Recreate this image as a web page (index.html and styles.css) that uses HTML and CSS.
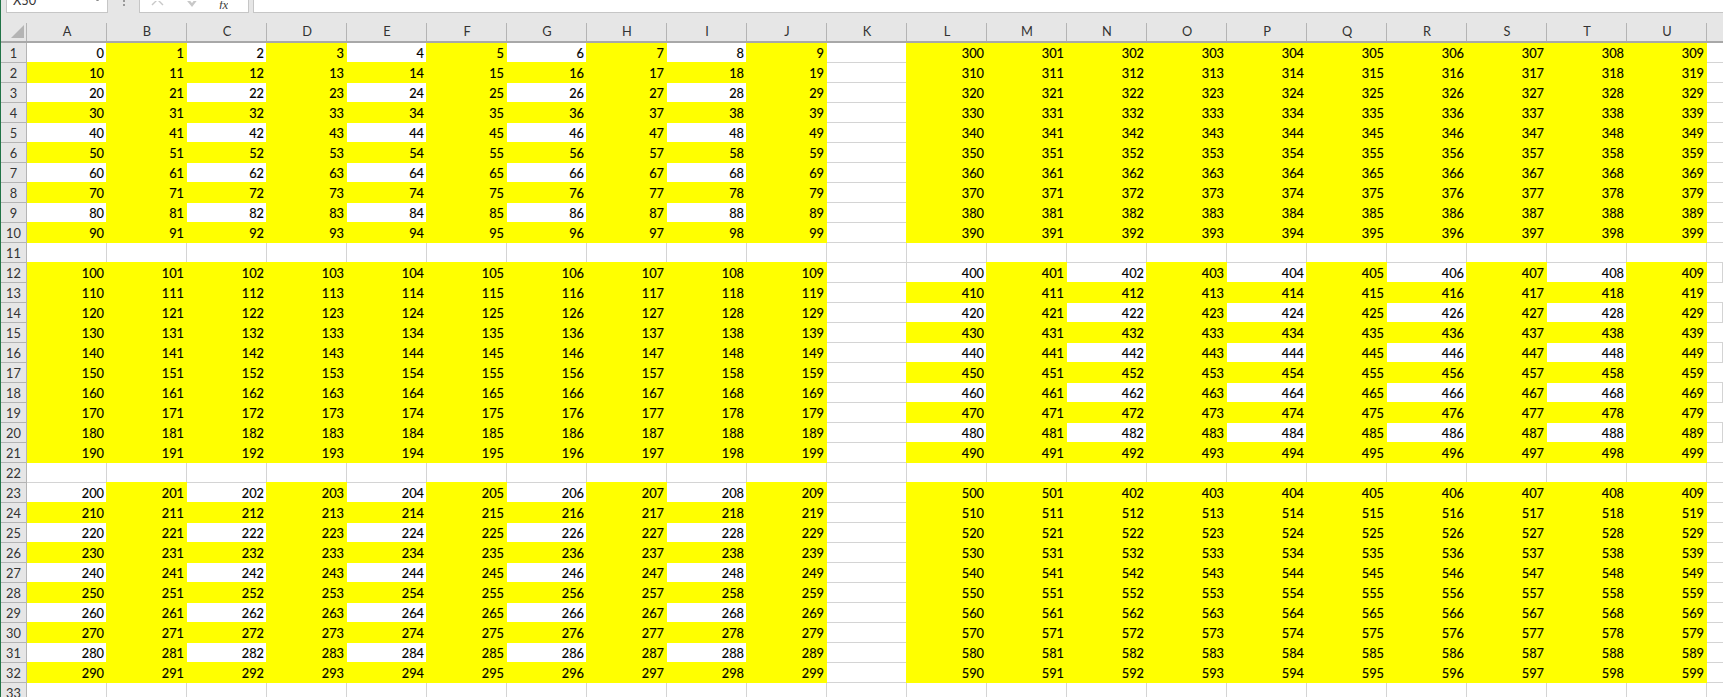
FILE: index.html
```html
<!DOCTYPE html>
<html lang="en">
<head>
<meta charset="utf-8">
<title>Sheet</title>
<link rel="stylesheet" href="styles.css">
</head>
<body>
<div class="app">
<div class="bar">
<div class="namebox"><span class="name">X50</span><svg class="chev" width="7" height="4" viewBox="0 0 7 4"><path d="M0.5 -1 L3.5 2 L6.5 -1" fill="none" stroke="#666" stroke-width="1"/></svg></div>
<div class="grip"><i></i><i></i></div>
<div class="btns">
<svg class="ico-x" width="13" height="8" viewBox="0 0 13 8"><path d="M1 -7 L12 4 M12 -7 L1 4" fill="none" stroke="#c8c8c8" stroke-width="1.4"/></svg>
<svg class="ico-c" width="14" height="8" viewBox="0 0 14 8"><path d="M1 -2 L6 4 L13 -5" fill="none" stroke="#c8c8c8" stroke-width="2.4"/></svg>
<span class="fx">fx</span>
</div>
<div class="input"></div>
</div>
<table class="sheet">
<thead>
<tr><th class="corner"><svg width="13" height="13" viewBox="0 0 13 13"><path d="M13 0 V13 H0 Z" fill="#b4b4b4"/></svg></th><th>A</th><th>B</th><th>C</th><th>D</th><th>E</th><th>F</th><th>G</th><th>H</th><th>I</th><th>J</th><th>K</th><th>L</th><th>M</th><th>N</th><th>O</th><th>P</th><th>Q</th><th>R</th><th>S</th><th>T</th><th>U</th><th class="end"></th></tr>
</thead>
<tbody>
<tr class="ck-left"><th>1</th><td>0</td><td>1</td><td>2</td><td>3</td><td>4</td><td>5</td><td>6</td><td>7</td><td>8</td><td>9</td><td></td><td>300</td><td>301</td><td>302</td><td>303</td><td>304</td><td>305</td><td>306</td><td>307</td><td>308</td><td>309</td><td class="pad"></td></tr>
<tr><th>2</th><td>10</td><td>11</td><td>12</td><td>13</td><td>14</td><td>15</td><td>16</td><td>17</td><td>18</td><td>19</td><td></td><td>310</td><td>311</td><td>312</td><td>313</td><td>314</td><td>315</td><td>316</td><td>317</td><td>318</td><td>319</td><td class="pad"></td></tr>
<tr class="ck-left"><th>3</th><td>20</td><td>21</td><td>22</td><td>23</td><td>24</td><td>25</td><td>26</td><td>27</td><td>28</td><td>29</td><td></td><td>320</td><td>321</td><td>322</td><td>323</td><td>324</td><td>325</td><td>326</td><td>327</td><td>328</td><td>329</td><td class="pad"></td></tr>
<tr><th>4</th><td>30</td><td>31</td><td>32</td><td>33</td><td>34</td><td>35</td><td>36</td><td>37</td><td>38</td><td>39</td><td></td><td>330</td><td>331</td><td>332</td><td>333</td><td>334</td><td>335</td><td>336</td><td>337</td><td>338</td><td>339</td><td class="pad"></td></tr>
<tr class="ck-left"><th>5</th><td>40</td><td>41</td><td>42</td><td>43</td><td>44</td><td>45</td><td>46</td><td>47</td><td>48</td><td>49</td><td></td><td>340</td><td>341</td><td>342</td><td>343</td><td>344</td><td>345</td><td>346</td><td>347</td><td>348</td><td>349</td><td class="pad"></td></tr>
<tr><th>6</th><td>50</td><td>51</td><td>52</td><td>53</td><td>54</td><td>55</td><td>56</td><td>57</td><td>58</td><td>59</td><td></td><td>350</td><td>351</td><td>352</td><td>353</td><td>354</td><td>355</td><td>356</td><td>357</td><td>358</td><td>359</td><td class="pad"></td></tr>
<tr class="ck-left"><th>7</th><td>60</td><td>61</td><td>62</td><td>63</td><td>64</td><td>65</td><td>66</td><td>67</td><td>68</td><td>69</td><td></td><td>360</td><td>361</td><td>362</td><td>363</td><td>364</td><td>365</td><td>366</td><td>367</td><td>368</td><td>369</td><td class="pad"></td></tr>
<tr><th>8</th><td>70</td><td>71</td><td>72</td><td>73</td><td>74</td><td>75</td><td>76</td><td>77</td><td>78</td><td>79</td><td></td><td>370</td><td>371</td><td>372</td><td>373</td><td>374</td><td>375</td><td>376</td><td>377</td><td>378</td><td>379</td><td class="pad"></td></tr>
<tr class="ck-left"><th>9</th><td>80</td><td>81</td><td>82</td><td>83</td><td>84</td><td>85</td><td>86</td><td>87</td><td>88</td><td>89</td><td></td><td>380</td><td>381</td><td>382</td><td>383</td><td>384</td><td>385</td><td>386</td><td>387</td><td>388</td><td>389</td><td class="pad"></td></tr>
<tr><th>10</th><td>90</td><td>91</td><td>92</td><td>93</td><td>94</td><td>95</td><td>96</td><td>97</td><td>98</td><td>99</td><td></td><td>390</td><td>391</td><td>392</td><td>393</td><td>394</td><td>395</td><td>396</td><td>397</td><td>398</td><td>399</td><td class="pad"></td></tr>
<tr class="blank"><th>11</th><td></td><td></td><td></td><td></td><td></td><td></td><td></td><td></td><td></td><td></td><td></td><td></td><td></td><td></td><td></td><td></td><td></td><td></td><td></td><td></td><td></td><td class="pad"></td></tr>
<tr class="ck-right"><th>12</th><td>100</td><td>101</td><td>102</td><td>103</td><td>104</td><td>105</td><td>106</td><td>107</td><td>108</td><td>109</td><td></td><td>400</td><td>401</td><td>402</td><td>403</td><td>404</td><td>405</td><td>406</td><td>407</td><td>408</td><td>409</td><td class="pad"></td></tr>
<tr><th>13</th><td>110</td><td>111</td><td>112</td><td>113</td><td>114</td><td>115</td><td>116</td><td>117</td><td>118</td><td>119</td><td></td><td>410</td><td>411</td><td>412</td><td>413</td><td>414</td><td>415</td><td>416</td><td>417</td><td>418</td><td>419</td><td class="pad"></td></tr>
<tr class="ck-right"><th>14</th><td>120</td><td>121</td><td>122</td><td>123</td><td>124</td><td>125</td><td>126</td><td>127</td><td>128</td><td>129</td><td></td><td>420</td><td>421</td><td>422</td><td>423</td><td>424</td><td>425</td><td>426</td><td>427</td><td>428</td><td>429</td><td class="pad"></td></tr>
<tr><th>15</th><td>130</td><td>131</td><td>132</td><td>133</td><td>134</td><td>135</td><td>136</td><td>137</td><td>138</td><td>139</td><td></td><td>430</td><td>431</td><td>432</td><td>433</td><td>434</td><td>435</td><td>436</td><td>437</td><td>438</td><td>439</td><td class="pad"></td></tr>
<tr class="ck-right"><th>16</th><td>140</td><td>141</td><td>142</td><td>143</td><td>144</td><td>145</td><td>146</td><td>147</td><td>148</td><td>149</td><td></td><td>440</td><td>441</td><td>442</td><td>443</td><td>444</td><td>445</td><td>446</td><td>447</td><td>448</td><td>449</td><td class="pad"></td></tr>
<tr><th>17</th><td>150</td><td>151</td><td>152</td><td>153</td><td>154</td><td>155</td><td>156</td><td>157</td><td>158</td><td>159</td><td></td><td>450</td><td>451</td><td>452</td><td>453</td><td>454</td><td>455</td><td>456</td><td>457</td><td>458</td><td>459</td><td class="pad"></td></tr>
<tr class="ck-right"><th>18</th><td>160</td><td>161</td><td>162</td><td>163</td><td>164</td><td>165</td><td>166</td><td>167</td><td>168</td><td>169</td><td></td><td>460</td><td>461</td><td>462</td><td>463</td><td>464</td><td>465</td><td>466</td><td>467</td><td>468</td><td>469</td><td class="pad"></td></tr>
<tr><th>19</th><td>170</td><td>171</td><td>172</td><td>173</td><td>174</td><td>175</td><td>176</td><td>177</td><td>178</td><td>179</td><td></td><td>470</td><td>471</td><td>472</td><td>473</td><td>474</td><td>475</td><td>476</td><td>477</td><td>478</td><td>479</td><td class="pad"></td></tr>
<tr class="ck-right"><th>20</th><td>180</td><td>181</td><td>182</td><td>183</td><td>184</td><td>185</td><td>186</td><td>187</td><td>188</td><td>189</td><td></td><td>480</td><td>481</td><td>482</td><td>483</td><td>484</td><td>485</td><td>486</td><td>487</td><td>488</td><td>489</td><td class="pad"></td></tr>
<tr><th>21</th><td>190</td><td>191</td><td>192</td><td>193</td><td>194</td><td>195</td><td>196</td><td>197</td><td>198</td><td>199</td><td></td><td>490</td><td>491</td><td>492</td><td>493</td><td>494</td><td>495</td><td>496</td><td>497</td><td>498</td><td>499</td><td class="pad"></td></tr>
<tr class="blank"><th>22</th><td></td><td></td><td></td><td></td><td></td><td></td><td></td><td></td><td></td><td></td><td></td><td></td><td></td><td></td><td></td><td></td><td></td><td></td><td></td><td></td><td></td><td class="pad"></td></tr>
<tr class="ck-left"><th>23</th><td>200</td><td>201</td><td>202</td><td>203</td><td>204</td><td>205</td><td>206</td><td>207</td><td>208</td><td>209</td><td></td><td>500</td><td>501</td><td>402</td><td>403</td><td>404</td><td>405</td><td>406</td><td>407</td><td>408</td><td>409</td><td class="pad"></td></tr>
<tr><th>24</th><td>210</td><td>211</td><td>212</td><td>213</td><td>214</td><td>215</td><td>216</td><td>217</td><td>218</td><td>219</td><td></td><td>510</td><td>511</td><td>512</td><td>513</td><td>514</td><td>515</td><td>516</td><td>517</td><td>518</td><td>519</td><td class="pad"></td></tr>
<tr class="ck-left"><th>25</th><td>220</td><td>221</td><td>222</td><td>223</td><td>224</td><td>225</td><td>226</td><td>227</td><td>228</td><td>229</td><td></td><td>520</td><td>521</td><td>522</td><td>523</td><td>524</td><td>525</td><td>526</td><td>527</td><td>528</td><td>529</td><td class="pad"></td></tr>
<tr><th>26</th><td>230</td><td>231</td><td>232</td><td>233</td><td>234</td><td>235</td><td>236</td><td>237</td><td>238</td><td>239</td><td></td><td>530</td><td>531</td><td>532</td><td>533</td><td>534</td><td>535</td><td>536</td><td>537</td><td>538</td><td>539</td><td class="pad"></td></tr>
<tr class="ck-left"><th>27</th><td>240</td><td>241</td><td>242</td><td>243</td><td>244</td><td>245</td><td>246</td><td>247</td><td>248</td><td>249</td><td></td><td>540</td><td>541</td><td>542</td><td>543</td><td>544</td><td>545</td><td>546</td><td>547</td><td>548</td><td>549</td><td class="pad"></td></tr>
<tr><th>28</th><td>250</td><td>251</td><td>252</td><td>253</td><td>254</td><td>255</td><td>256</td><td>257</td><td>258</td><td>259</td><td></td><td>550</td><td>551</td><td>552</td><td>553</td><td>554</td><td>555</td><td>556</td><td>557</td><td>558</td><td>559</td><td class="pad"></td></tr>
<tr class="ck-left"><th>29</th><td>260</td><td>261</td><td>262</td><td>263</td><td>264</td><td>265</td><td>266</td><td>267</td><td>268</td><td>269</td><td></td><td>560</td><td>561</td><td>562</td><td>563</td><td>564</td><td>565</td><td>566</td><td>567</td><td>568</td><td>569</td><td class="pad"></td></tr>
<tr><th>30</th><td>270</td><td>271</td><td>272</td><td>273</td><td>274</td><td>275</td><td>276</td><td>277</td><td>278</td><td>279</td><td></td><td>570</td><td>571</td><td>572</td><td>573</td><td>574</td><td>575</td><td>576</td><td>577</td><td>578</td><td>579</td><td class="pad"></td></tr>
<tr class="ck-left"><th>31</th><td>280</td><td>281</td><td>282</td><td>283</td><td>284</td><td>285</td><td>286</td><td>287</td><td>288</td><td>289</td><td></td><td>580</td><td>581</td><td>582</td><td>583</td><td>584</td><td>585</td><td>586</td><td>587</td><td>588</td><td>589</td><td class="pad"></td></tr>
<tr><th>32</th><td>290</td><td>291</td><td>292</td><td>293</td><td>294</td><td>295</td><td>296</td><td>297</td><td>298</td><td>299</td><td></td><td>590</td><td>591</td><td>592</td><td>593</td><td>594</td><td>595</td><td>596</td><td>597</td><td>598</td><td>599</td><td class="pad"></td></tr>
<tr class="blank"><th>33</th><td></td><td></td><td></td><td></td><td></td><td></td><td></td><td></td><td></td><td></td><td></td><td></td><td></td><td></td><td></td><td></td><td></td><td></td><td></td><td></td><td></td><td class="pad"></td></tr>
</tbody>
</table>
</div>
</body>
</html>
```
FILE: styles.css
```css
html, body {
  margin: 0;
  padding: 0;
  height: 100%;
  overflow: hidden;
  background: #fff;
}

.app {
  width: 1723px;
  height: 697px;
  box-sizing: border-box;
  border-left: 1px solid #217346;
  overflow: hidden;
  font-family: Lato, "Liberation Sans", sans-serif;
  font-size: 12.8px;
  color: #000;
}

/* Formula bar, cropped by the top edge of the shot */
.bar {
  display: flex;
  align-items: flex-end;
  height: 13px;
  background: #e6e6e6;
  overflow: hidden;
}

.namebox, .btns, .input {
  box-sizing: border-box;
  height: 20px;
  background: #fff;
  border: 1px solid #c6c6c6;
  flex: none;
  position: relative;
}

.namebox {
  width: 102px;
  margin-left: 5px;
  padding-left: 6px;
  line-height: 8px;
  color: #333;
}

.name {
  display: block;
  margin-top: 2px;
}

.chev {
  position: absolute;
  right: 6px;
  bottom: 9px;
}

.grip {
  width: 31px;
  height: 13px;
  flex: none;
  display: flex;
  flex-direction: column;
  align-items: center;
  gap: 2px;
}

.grip i {
  width: 2px;
  height: 2px;
  background: #999;
}

.btns {
  width: 110px;
  margin-right: 4px;
  display: flex;
  align-items: flex-end;
  padding-bottom: 3px;
  padding-left: 11px;
}

.ico-x { margin-right: 22px; }
.ico-c { margin-right: 19px; }

.fx {
  font-family: "Liberation Serif", serif;
  font-style: italic;
  font-size: 13px;
  line-height: 8px;
  color: #444;
  height: 8px;
  overflow: hidden;
}

.input {
  flex: 1;
  border-right: 0;
}

/* Sheet grid */
.sheet {
  border-collapse: separate;
  border-spacing: 0;
  table-layout: fixed;
  width: 1722px;
}

.sheet th, .sheet td {
  box-sizing: border-box;
  height: 20px;
  padding: 0;
  font-size: 12.8px;
  font-weight: 400;
}

.sheet th {
  position: relative;
  z-index: 1;
  background: #e6e6e6;
  color: #333;
  text-align: center;
}

.sheet thead th {
  height: 30px;
  width: 80px;
  line-height: 19px;
  vertical-align: bottom;
  border-bottom: 2px solid #a8a8a8;
}

/* Header separators stop short of the top of the band */
.sheet thead th::after {
  content: "";
  position: absolute;
  top: 10px;
  bottom: 0;
  right: 0;
  width: 1px;
  background: #b4b4b4;
}

.sheet thead th.corner {
  width: 26px;
  text-align: left;
  padding: 0 0 3px 10px;
  line-height: 0;
}

.sheet thead th.end {
  width: 16px;
}

.sheet thead th.end::after {
  display: none;
}

.sheet tbody th {
  width: 26px;
  padding-top: 1px;
  line-height: 18px;
  border-right: 1px solid #b4b4b4;
  border-bottom: 1px solid #b4b4b4;
}

.sheet td {
  background: #ff0;
  box-shadow: -1px 0 #ff0, 0 -1px #ff0, -1px -1px #ff0;
  color: #000;
  text-align: right;
  padding: 1px 3px 0 0;
  line-height: 19px;
  vertical-align: top;
  overflow: hidden;
  -webkit-text-stroke: 0.15px #000;
}

/* White cells keep the gridlines that the filled cells cover */
.sheet td:nth-child(12),
.blank td,
.ck-left td:nth-child(even):nth-child(-n+10),
.ck-right td:nth-child(odd):nth-child(n+13) {
  background: #fff;
  box-shadow: inset -1px -1px 0 #d4d4d4;
}

.sheet td.pad {
  background: #fff;
  box-shadow: inset 0 -1px 0 #d4d4d4;
}
```
